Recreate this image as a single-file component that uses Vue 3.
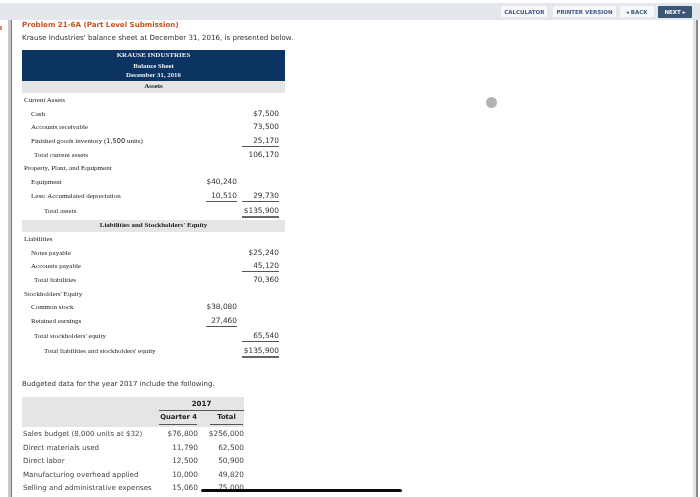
<template>
  <div class="page">
    <div class="topbar">
      <button class="btn">CALCULATOR</button>
      <button class="btn">PRINTER VERSION</button>
      <button class="btn back">&#9666; BACK</button>
      <button class="btn next">NEXT &#9656;</button>
    </div>

    <div class="frame">
      <div class="content">
        <h1 class="title">Problem 21-6A (Part Level Submission)</h1>
        <p class="intro">Krause Industries' balance sheet at December 31, 2016, is presented below.</p>

        <div class="sheet">
          <div class="sheet-head">
            <div>KRAUSE INDUSTRIES</div>
            <div class="small">Balance Sheet</div>
            <div class="small">December 31, 2016</div>
          </div>
          <div class="band">Assets</div>
          <div v-for="row in assetRows" :key="row.label" class="row" :class="row.cls">
            <div class="label" :class="'ind' + row.indent">{{ row.label }}<span v-if="row.note" class="num-inline">{{ row.note }}</span><span v-if="row.after"> units)</span></div>
            <div class="num" :class="row.line1"><span>{{ row.a }}</span></div>
            <div class="num" :class="row.line2"><span>{{ row.b }}</span></div>
          </div>
          <div class="band">Liabilities and Stockholders' Equity</div>
          <div v-for="row in liabilityRows" :key="row.label" class="row" :class="row.cls">
            <div class="label" :class="'ind' + row.indent">{{ row.label }}</div>
            <div class="num" :class="row.line1"><span>{{ row.a }}</span></div>
            <div class="num" :class="row.line2"><span>{{ row.b }}</span></div>
          </div>
        </div>

        <p class="budget-intro">Budgeted data for the year 2017 include the following.</p>

        <div class="budget">
          <div class="budget-head">
            <div></div>
            <div class="year">2017</div>
            <div class="qh"><span>Quarter 4</span></div>
            <div class="qh"><span class="total-head">Total</span></div>
          </div>
          <div v-for="row in budgetRows" :key="row[0]" class="budget-row">
            <div>{{ row[0] }}</div>
            <div class="bnum">{{ row[1] }}</div>
            <div class="bnum">{{ row[2] }}</div>
          </div>
        </div>
      </div>
    </div>

    <div class="mark"></div>
    <div class="dot"></div>
    <div class="black-line"></div>
  </div>
</template>

<script setup>
const assetRows = [
  { label: 'Current Assets', indent: 0 },
  { label: 'Cash', indent: 1, b: '$7,500' },
  { label: 'Accounts receivable', indent: 1, b: '73,500' },
  { label: 'Finished goods inventory (', note: '1,500', after: true, indent: 1, b: '25,170', line2: 'single' },
  { label: 'Total current assets', indent: 2, b: '106,170' },
  { label: 'Property, Plant, and Equipment', indent: 0 },
  { label: 'Equipment', indent: 1, a: '$40,240' },
  { label: 'Less: Accumulated depreciation', indent: 1, a: '10,510', b: '29,730', line1: 'single narrow', line2: 'single' },
  { label: 'Total assets', indent: 3, b: '$135,900', line2: 'double', cls: 'taller' }
]

const liabilityRows = [
  { label: 'Liabilities', indent: 0 },
  { label: 'Notes payable', indent: 1, b: '$25,240' },
  { label: 'Accounts payable', indent: 1, b: '45,120', line2: 'single' },
  { label: 'Total liabilities', indent: 2, b: '70,360' },
  { label: "Stockholders' Equity", indent: 0 },
  { label: 'Common stock', indent: 1, a: '$38,080' },
  { label: 'Retained earnings', indent: 1, a: '27,460', line1: 'single narrow' },
  { label: "Total stockholders' equity", indent: 2, b: '65,540', line2: 'single', cls: 'tall' },
  { label: "Total liabilities and stockholders' equity", indent: 3, b: '$135,900', line2: 'double', cls: 'tall' }
]

const budgetRows = [
  ['Sales budget (8,000 units at $32)', '$76,800', '$256,000'],
  ['Direct materials used', '11,790', '62,500'],
  ['Direct labor', '12,500', '50,900'],
  ['Manufacturing overhead applied', '10,000', '49,820'],
  ['Selling and administrative expenses', '15,060', '75,000']
]
</script>

<style>
html, body {
  margin: 0;
  background: #fff;
  overflow: hidden;
}
</style>

<style scoped>
.page {
  position: relative;
  width: 700px;
  height: 497px;
  padding-top: 3px;
  box-sizing: border-box;
  overflow: hidden;
  background: #fff;
  font-family: "DejaVu Sans", Verdana, sans-serif;
  color: #333;
  filter: blur(0.35px);
}

.topbar {
  height: 17px;
  background: #e4e7ec;
  display: flex;
  justify-content: flex-end;
  align-items: center;
  padding-right: 8px;
  gap: 6px;
}

.btn {
  height: 11px;
  padding: 0 3px;
  border: none;
  border-radius: 1px;
  background: #f7f8fa;
  color: #3d5a85;
  font-family: "DejaVu Sans", Verdana, sans-serif;
  font-size: 5.5px;
  font-weight: 700;
  white-space: nowrap;
}

.back {
  margin-left: -2px;
  padding: 0 6.5px;
}

.next {
  margin-left: -2px;
  background: #3b5778;
  color: #fff;
  height: 12px;
  padding: 0 6.5px;
}

.frame {
  margin-left: 8px;
  margin-right: 4px;
  border-left: 3px solid #c9c9c9;
  border-right: 3px solid #dfe2e7;
  height: 477px;
  position: relative;
}

.frame::before {
  content: "";
  position: absolute;
  left: 0;
  top: 0;
  bottom: 0;
  width: 1px;
  background: #777;
}

.frame::after {
  content: "";
  position: absolute;
  right: -5px;
  top: 0;
  bottom: 0;
  width: 2px;
  background: #8a8a8a;
}

.content {
  padding-left: 11px;
}

.title {
  margin: 0;
  font-size: 7.1px;
  line-height: 9px;
  font-weight: 700;
  color: #c9501f;
}

.intro {
  margin: 3px 0 7px;
  font-size: 7.1px;
  line-height: 11px;
}

.sheet {
  width: 263px;
  font-family: "Liberation Serif", serif;
  font-size: 7px;
  color: #222;
}

.sheet-head {
  height: 31px;
  background: #0b3463;
  color: #e8ecf2;
  text-align: center;
  font-weight: 700;
  font-size: 7px;
  line-height: 9.5px;
  padding-top: 1px;
  box-sizing: border-box;
}

.small {
  font-size: 6.8px;
}

.band {
  height: 12px;
  background: #e5e5e5;
  text-align: center;
  font-weight: 700;
  font-size: 7px;
  line-height: 11px;
  color: #222;
}

.row {
  display: grid;
  grid-template-columns: 1fr 45px 42px;
  padding-right: 6px;
  height: 13.7px;
  align-items: center;
}

.row.tall {
  height: 15.5px;
}

.row.taller {
  height: 17.5px;
}

.label {
  padding-left: 2px;
  white-space: nowrap;
}

.ind1 {
  padding-left: 9px;
}

.ind2 {
  padding-left: 12px;
}

.ind3 {
  padding-left: 22px;
}

.num-inline {
  font-family: "DejaVu Sans", sans-serif;
  font-size: 6.6px;
}

.num {
  text-align: right;
  font-family: "DejaVu Sans", sans-serif;
  font-size: 7.4px;
  line-height: 10px;
  color: #333;
}

.num.single {
  border-bottom: 1px solid #555;
  margin-left: 5px;
  margin-bottom: -1px;
}

.num.narrow {
  margin-left: 14px;
}

.num.double {
  border-bottom: 2px solid #666;
  margin-left: 5px;
  margin-bottom: -2px;
}

.budget-intro {
  margin: 20px 0 7.5px;
  font-size: 7px;
  line-height: 11px;
}

.budget {
  width: 222px;
  font-size: 7.1px;
  color: #444;
}

.budget-head {
  display: grid;
  grid-template-columns: 136px 40px 46px;
  grid-template-rows: 14px 15.5px;
  background: #e5e5e5;
  font-weight: 700;
  color: #222;
}

.budget-head > div:first-child {
  grid-row: 1 / 3;
}

.year {
  grid-column: 2 / 4;
  text-align: center;
  line-height: 14px;
  border-bottom: 1px solid #555;
  margin-left: 1px;
}

.qh {
  text-align: right;
  line-height: 13px;
  padding-right: 1px;
  white-space: nowrap;
  font-size: 6.8px;
}

.qh span {
  display: inline-block;
  border-bottom: 1px solid #555;
  padding-left: 1px;
}

.qh .total-head {
  width: 33px;
  padding-left: 0;
  text-align: center;
}

.budget-row {
  display: grid;
  grid-template-columns: 135px 40px 46px;
  height: 13.5px;
  align-items: center;
  padding-left: 1px;
  white-space: nowrap;
}

.bnum {
  text-align: right;
  font-size: 7.4px;
}

.mark {
  position: absolute;
  left: 0;
  top: 26px;
  width: 2px;
  height: 4px;
  background: #d98a5e;
}

.dot {
  position: absolute;
  left: 486px;
  top: 97px;
  width: 11px;
  height: 11px;
  border-radius: 50%;
  background: #b2b2b2;
}

.black-line {
  position: absolute;
  left: 201px;
  top: 489px;
  width: 201px;
  height: 3px;
  border-radius: 2px;
  background: #0a0a0a;
}
</style>
